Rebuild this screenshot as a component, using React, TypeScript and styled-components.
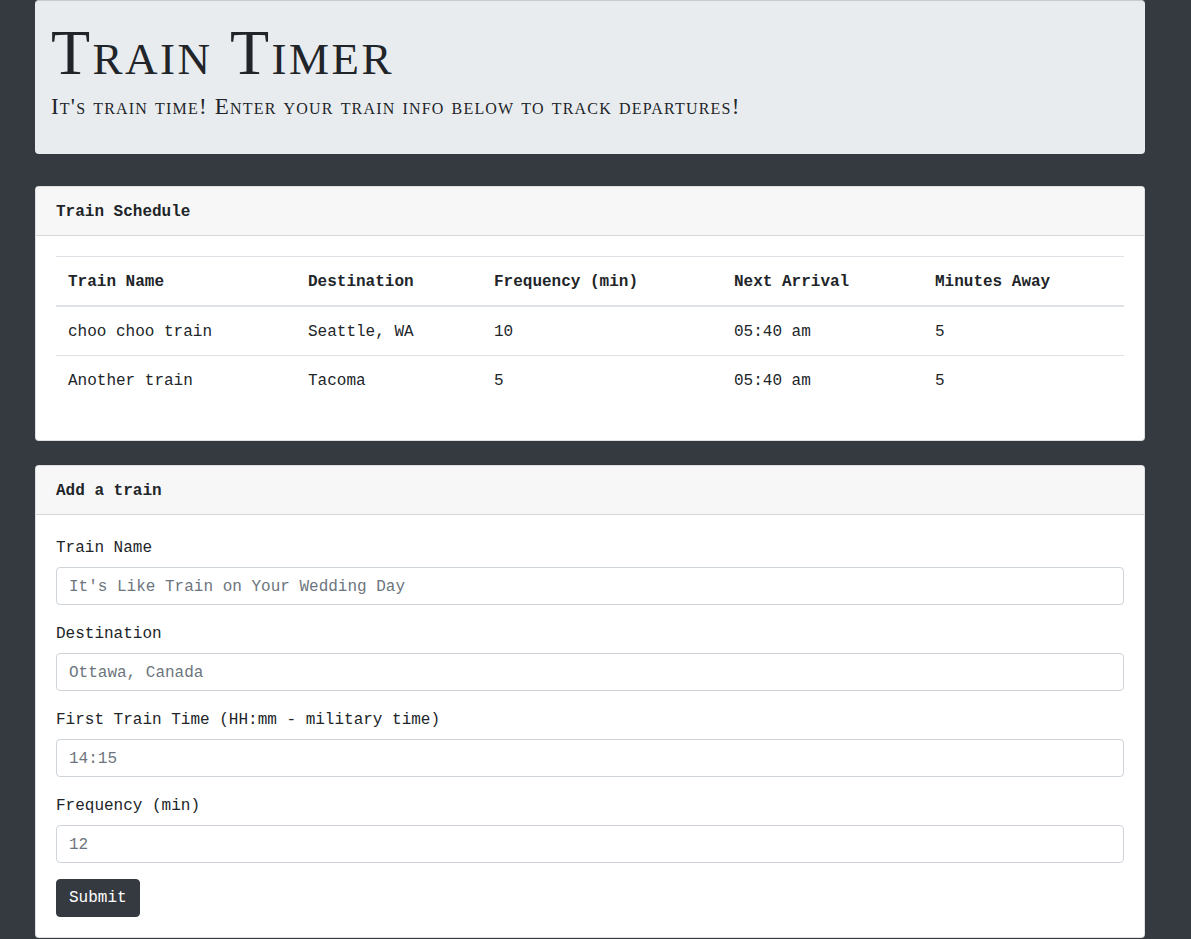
import { createGlobalStyle, styled } from 'styled-components';

const GlobalStyle = createGlobalStyle`
    html, body {
        margin: 0;
        padding: 0;
        background: #343a40;
    }
    body {
        font-family: "Liberation Mono", "DejaVu Sans Mono", monospace;
        font-size: 16px;
        line-height: 1.5;
        color: #212529;
    }
    * {
        box-sizing: border-box;
    }
`;

const Page = styled.div`
    padding: 0 46px 0 35px;
    min-height: 939px;
`;

const Container = styled.div`
    width: 1110px;
`;

const Jumbotron = styled.header`
    background: #e9ecef;
    border-radius: 4px;
    border-top: 1px solid #c8cbce;
    padding: 17px 16px 32px;
    height: 154px;
    margin-bottom: 32px;
`;

const Title = styled.h1`
    font-family: "Liberation Serif", "DejaVu Serif", serif;
    font-variant: small-caps;
    font-weight: 400;
    font-size: 64px;
    letter-spacing: 2.5px;
    line-height: 1.1;
    margin: 0 0 5px;
    color: #212529;
`;

const Lead = styled.p`
    font-family: "Liberation Serif", "DejaVu Serif", serif;
    font-variant: small-caps;
    font-size: 23px;
    letter-spacing: 1.2px;
    line-height: 1.2;
    margin: 0;
    color: #212529;
`;

const Card = styled.section<{ $gap?: number }>`
    background: #fff;
    border-radius: 4px;
    border: 1px solid rgba(0, 0, 0, 0.125);
    margin-bottom: ${(p) => p.$gap ?? 0}px;
    overflow: hidden;
`;

const CardHeader = styled.div`
    background: #f7f7f7;
    border-bottom: 1px solid rgba(0, 0, 0, 0.125);
    padding: 13px 20px 11px;
    font-weight: 700;
    line-height: 24px;
`;

const CardBody = styled.div`
    padding: 20px;
`;

const Table = styled.table`
    width: 100%;
    border-collapse: collapse;
    margin-bottom: 16px;
`;

const Th = styled.th<{ $w?: number }>`
    text-align: left;
    font-weight: 700;
    padding: 13px 12px 11px;
    border-top: 1px solid #dee2e6;
    border-bottom: 2px solid #dee2e6;
    width: ${(p) => (p.$w ? `${p.$w}px` : 'auto')};
`;

const Td = styled.td`
    padding: 13px 12px 11px;
    border-top: 1px solid #dee2e6;
`;

const FormGroup = styled.div`
    margin-bottom: 16px;
`;

const Label = styled.label`
    display: block;
    padding-top: 1px;
    margin-bottom: 7px;
    line-height: 24px;
`;

const Input = styled.input`
    display: block;
    width: 100%;
    height: 38px;
    padding: 7px 12px 5px;
    font-family: inherit;
    font-size: 16px;
    color: #495057;
    background: #fff;
    border: 1px solid #ced4da;
    border-radius: 4px;
    &::placeholder {
        color: #6c757d;
    }
`;

const Button = styled.button`
    font-family: inherit;
    font-size: 16px;
    line-height: 24px;
    padding: 6px 12px;
    height: 38px;
    color: #fff;
    background: #343a40;
    border: 1px solid #343a40;
    border-radius: 4px;
`;

const trains = [
    { name: 'choo choo train', dest: 'Seattle, WA', freq: '10', next: '05:40 am', away: '5' },
    { name: 'Another train', dest: 'Tacoma', freq: '5', next: '05:40 am', away: '5' },
];

const fields = [
    { label: 'Train Name', placeholder: "It's Like Train on Your Wedding Day" },
    { label: 'Destination', placeholder: 'Ottawa, Canada' },
    { label: 'First Train Time (HH:mm - military time)', placeholder: '14:15' },
    { label: 'Frequency (min)', placeholder: '12' },
];

export default function App() {
    return (
        <Page>
            <GlobalStyle />
            <Container>
                <Jumbotron>
                    <Title>Train Timer</Title>
                    <Lead>It's train time! Enter your train info below to track departures!</Lead>
                </Jumbotron>

                <Card $gap={24}>
                    <CardHeader>Train Schedule</CardHeader>
                    <CardBody>
                        <Table>
                            <thead>
                                <tr>
                                    <Th $w={240}>Train Name</Th>
                                    <Th $w={186}>Destination</Th>
                                    <Th $w={240}>Frequency (min)</Th>
                                    <Th $w={201}>Next Arrival</Th>
                                    <Th>Minutes Away</Th>
                                </tr>
                            </thead>
                            <tbody>
                                {trains.map((t) => (
                                    <tr key={t.name}>
                                        <Td>{t.name}</Td>
                                        <Td>{t.dest}</Td>
                                        <Td>{t.freq}</Td>
                                        <Td>{t.next}</Td>
                                        <Td>{t.away}</Td>
                                    </tr>
                                ))}
                            </tbody>
                        </Table>
                    </CardBody>
                </Card>

                <Card>
                    <CardHeader>Add a train</CardHeader>
                    <CardBody>
                        {fields.map((f) => (
                            <FormGroup key={f.label}>
                                <Label>{f.label}</Label>
                                <Input placeholder={f.placeholder} />
                            </FormGroup>
                        ))}
                        <Button>Submit</Button>
                    </CardBody>
                </Card>
            </Container>
        </Page>
    );
}
